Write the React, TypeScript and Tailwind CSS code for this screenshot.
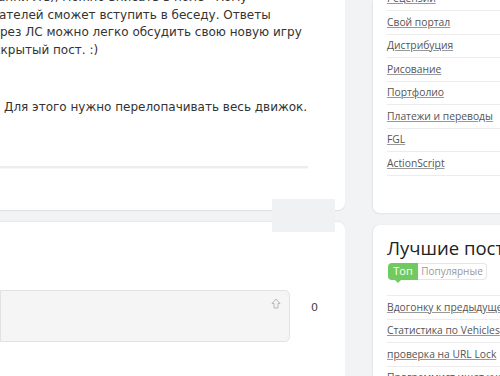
const sans = "font-['DejaVu_Sans',Verdana,sans-serif]";

const topLinks = ["Рецензии", "Свой портал", "Дистрибуция", "Рисование", "Портфолио", "Платежи и переводы", "FGL", "ActionScript"];
const bestLinks = ["Вдогонку к предыдущему посту", "Статистика по Vehicles", "проверка на URL Lock", "Программист ищет художника"];

function LinkRow({ text }: { text: string }) {
    return (
        <div className="h-[23.5px] flex items-center border-b border-[#ececec] whitespace-nowrap">
            <a className="text-[10.3px] font-['Open_Sans',sans-serif] text-[#555] underline decoration-[#999]">{text}</a>
        </div>
    );
}

export default function App() {
    return (
        <div className={`relative w-[500px] h-[376px] overflow-hidden bg-[#f2f3f5] flex gap-[28px] ${sans}`}>
            {/* left column */}
            <div className="w-[345px] shrink-0 flex flex-col gap-[12px]">
                <div className="h-[210px] shrink-0 bg-white rounded-br-[7px] shadow-[0_1px_1px_rgba(0,0,0,0.08)] overflow-hidden">
                    <div className="w-[308px] text-[12px] leading-[17.5px] text-[#333] whitespace-nowrap">
                        <div className="-mt-[11px]">
                            <div className="-ml-[2px]">анни ЛС), можно вписать в поле «Кому»</div>
                            <div className="-ml-[1px]">ателей сможет вступить в беседу. Ответы</div>
                            <div>рез ЛС можно легко обсудить свою новую игру</div>
                            <div className="-ml-[6px]">скрытый пост. :)</div>
                        </div>
                        <div className="mt-[40px] ml-[4px]">Для этого нужно перелопачивать весь движок.</div>
                        <div className="mt-[49px] h-[3px] border-t-2 border-[#ededed] bg-[#f8f8f8]" />
                    </div>
                </div>
                <div className="flex-1 bg-white rounded-tr-[7px] shadow-[0_-1px_1px_rgba(0,0,0,0.05)] pt-[68px]">
                    <div className="flex items-start">
                        <div className="relative w-[290px] h-[52px] bg-[#f5f5f5] border border-[#e2e2e2] rounded-r-[5px]">
                            <svg className="absolute right-[8px] top-[7px]" width="10" height="11" viewBox="0 0 10 11" fill="none">
                                <path d="M5 1 L9 5.5 H7 V10 H3 V5.5 H1 Z" stroke="#b8b8b8" strokeWidth="1" strokeLinejoin="round" />
                            </svg>
                        </div>
                        <span className="ml-[21px] mt-[10px] text-[11px] text-[#444]">0</span>
                    </div>
                </div>
            </div>

            {/* right column */}
            <div className="flex-1 flex flex-col gap-[12px]">
                <div className="h-[213px] shrink-0 bg-white rounded-bl-[7px] shadow-[-1px_1px_2px_rgba(0,0,0,0.06)] pl-[14px] overflow-hidden">
                    <div className="-mt-[12.5px] w-[200px]">
                        {topLinks.map((t) => (
                            <LinkRow key={t} text={t} />
                        ))}
                    </div>
                </div>
                <div className="flex-1 bg-white rounded-tl-[7px] shadow-[-1px_0_2px_rgba(0,0,0,0.06)] pl-[14px] pt-[12px] overflow-hidden">
                    <div className="text-[18.5px] leading-[22px] text-[#222] whitespace-nowrap font-['Open_Sans',sans-serif]">Лучшие посты</div>
                    <div className="flex mt-[4px] ml-[1px] h-[17px] text-[10px] font-['Open_Sans',sans-serif]">
                        <div className="relative w-[30px] bg-[#6fcb5f] text-white text-[11px] rounded-l-[4px] flex items-center justify-center">
                            Топ
                            <span className="absolute left-[7px] -bottom-[3px] w-0 h-0 border-l-[3px] border-r-[3px] border-t-[3px] border-l-transparent border-r-transparent border-t-[#6fcb5f]" />
                        </div>
                        <div className="w-[69px] border border-l-0 border-[#e6e6e6] rounded-r-[4px] text-[#999] flex items-center justify-center">Популярные</div>
                    </div>
                    <div className="mt-[15px] w-[200px] border-t border-[#ececec]">
                        {bestLinks.map((t) => (
                            <LinkRow key={t} text={t} />
                        ))}
                    </div>
                </div>
            </div>

            {/* floating button over the cards */}
            <div className="absolute left-[272px] top-[199px] w-[63px] h-[33px] bg-[#f0f1f3]" />
        </div>
    );
}
